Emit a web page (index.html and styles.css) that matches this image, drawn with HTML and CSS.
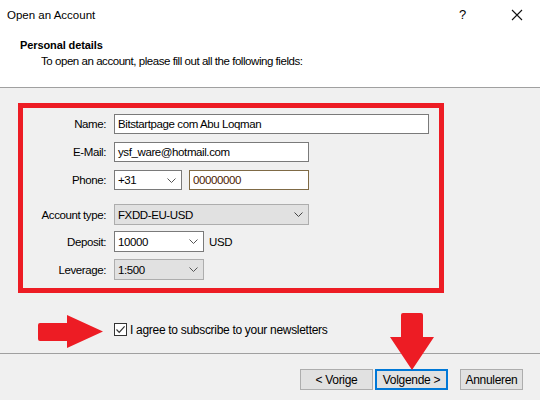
FILE: index.html
```html
<!DOCTYPE html>
<html>
<head>
<meta charset="utf-8">
<link rel="stylesheet" href="styles.css">
</head>
<body>
<div class="dialog">
  <div class="top">
    <div class="titlebar">
      <span class="title">Open an Account</span>
      <span class="help">?</span>
      <svg class="close" width="12" height="12" viewBox="0 0 12 12"><path d="M1 1 L11 11 M11 1 L1 11" stroke="#111" stroke-width="1.1" fill="none"/></svg>
    </div>
    <div class="heading">
      <div class="h-title">Personal details</div>
      <div class="h-sub">To open an account, please fill out all the following fields:</div>
    </div>
  </div>

  <div class="body">
    <div class="redbox">
      <div class="row">
        <span class="label">Name:</span>
        <div class="field w-name">Bitstartpage com Abu Loqman</div>
      </div>
      <div class="row">
        <span class="label">E-Mail:</span>
        <div class="field w-mid">ysf_ware@hotmail.com</div>
      </div>
      <div class="row">
        <span class="label">Phone:</span>
        <div class="field combo w-code">+31<svg class="chev" width="9" height="5" viewBox="0 0 9 5"><path d="M0.5 0.5 L4.5 4.5 L8.5 0.5" stroke="#555" fill="none"/></svg></div>
        <div class="field focus w-phone">00000000</div>
      </div>
      <div class="row row-acct">
        <span class="label">Account type:</span>
        <div class="field combo gray w-mid">FXDD-EU-USD<svg class="chev" width="9" height="5" viewBox="0 0 9 5"><path d="M0.5 0.5 L4.5 4.5 L8.5 0.5" stroke="#444" fill="none"/></svg></div>
      </div>
      <div class="row row-dep">
        <span class="label">Deposit:</span>
        <div class="field combo w-small">10000<svg class="chev" width="9" height="5" viewBox="0 0 9 5"><path d="M0.5 0.5 L4.5 4.5 L8.5 0.5" stroke="#555" fill="none"/></svg></div>
        <span class="unit">USD</span>
      </div>
      <div class="row row-lev">
        <span class="label">Leverage:</span>
        <div class="field combo gray w-small">1:500<svg class="chev" width="9" height="5" viewBox="0 0 9 5"><path d="M0.5 0.5 L4.5 4.5 L8.5 0.5" stroke="#555" fill="none"/></svg></div>
      </div>
    </div>

    <div class="agree">
      <span class="checkbox"><svg width="11" height="11" viewBox="0 0 11 11"><path d="M1.5 5.5 L4.2 8.3 L9.6 2.3" stroke="#333" stroke-width="1.2" fill="none"/></svg></span>
      <span class="agree-text">I agree to subscribe to your newsletters</span>
    </div>
  </div>

  <div class="footer">
    <button class="btn w-btn">&lt; Vorige</button>
    <button class="btn default w-btn">Volgende &gt;</button>
    <button class="btn cancel">Annuleren</button>
  </div>

  <svg class="arrow-left" width="70" height="36" viewBox="0 0 70 36"><path d="M2 8 L29 8 L29 0 L65 16.5 L29 33 L29 26 L2 26 Q0 26 0 24 L0 10 Q0 8 2 8 Z" fill="#ed1c24"/></svg>
  <svg class="arrow-down" width="46" height="58" viewBox="0 0 46 58"><path d="M11 2 Q11 0 13 0 L31 0 Q33 0 33 2 L33 24 L44 24 L22 57 L0 24 L11 24 Z" fill="#ed1c24"/></svg>
</div>
</body>
</html>
```

FILE: styles.css
```css
html, body {
  margin: 0;
  padding: 0;
}
body {
  font-family: "Liberation Sans", Arial, sans-serif;
  font-size: 11.5px;
  letter-spacing: -0.4px;
  color: #000;
}
.dialog {
  position: relative;
  width: 540px;
  height: 400px;
  background: #f0f0f0;
  overflow: hidden;
}
.top {
  height: 87px;
  background: #fff;
  border-bottom: 1px solid #a0a0a0;
}
.titlebar {
  height: 29px;
  display: flex;
  align-items: center;
  padding-left: 7px;
  font-size: 11.5px;
  letter-spacing: 0;
  color: #000;
}
.title {
  flex: 1;
}
.help {
  width: 10px;
  margin-right: 42px;
  font-size: 13px;
}
.close {
  margin-right: 17px;
}
.heading {
  padding-top: 9px;
}
.h-title {
  padding-left: 20px;
  font-weight: bold;
  font-size: 11px;
  letter-spacing: -0.1px;
  line-height: 14px;
  height: 14px;
}
.h-sub {
  padding-left: 41px;
  margin-top: 2px;
  line-height: 14px;
  letter-spacing: -0.45px;
}
.body {
  padding-top: 15px;
}
.redbox {
  box-sizing: border-box;
  margin-left: 18px;
  width: 426px;
  height: 190px;
  border: 5px solid #ed1c24;
  padding-top: 6px;
  display: flex;
  flex-direction: column;
}
.row {
  display: flex;
  align-items: center;
  height: 20px;
  margin-bottom: 8px;
}
.row-acct {
  margin-top: 6px;
  height: 21px;
  margin-bottom: 6px;
}
.row-dep {
  height: 21px;
  margin-bottom: 7px;
}
.row-lev {
  height: 21px;
}
.label {
  width: 83px;
  text-align: right;
  margin-right: 8px;
  color: #000;
}
.field {
  box-sizing: border-box;
  height: 100%;
  background: #fff;
  border: 1px solid #7a7a7a;
  padding-left: 3px;
  display: flex;
  align-items: center;
  color: #000;
}
.combo {
  position: relative;
  justify-content: space-between;
  padding-right: 5px;
}
.gray {
  background: #e1e1e1;
  border-color: #adadad;
}
.focus {
  border-color: #7f6a45;
  margin-left: 7px;
  color: #4a2200;
}
.chev {
  flex: none;
}
.w-name { width: 315px; }
.w-mid { width: 195px; }
.w-code { width: 68px; }
.w-phone { width: 120px; }
.w-small { width: 90px; }
.unit {
  margin-left: 5px;
}
.agree {
  display: flex;
  align-items: center;
  margin-top: 30px;
  margin-left: 114px;
  height: 13px;
}
.checkbox {
  box-sizing: border-box;
  width: 13px;
  height: 13px;
  border: 1px solid #333;
  background: #fff;
  display: flex;
  align-items: center;
  justify-content: center;
}
.agree-text {
  margin-left: 3px;
  font-size: 12px;
  letter-spacing: -0.3px;
}
.footer {
  position: absolute;
  left: 0;
  right: 0;
  top: 353px;
  bottom: 0;
  border-top: 1px solid #a0a0a0;
  display: flex;
  align-items: flex-start;
  padding-top: 15px;
  padding-left: 300px;
}
.btn {
  box-sizing: border-box;
  height: 21px;
  font-family: "Liberation Sans", Arial, sans-serif;
  font-size: 12px;
  letter-spacing: -0.3px;
  color: #000;
  background: #e1e1e1;
  border: 1px solid #adadad;
  padding: 0;
  margin: 0;
}
.w-btn { width: 73px; }
.default {
  margin-left: 2px;
  border: 2px solid #0078d7;
}
.cancel {
  width: 63px;
  margin-left: 12px;
}
.arrow-left {
  position: absolute;
  left: 38px;
  top: 315px;
}
.arrow-down {
  position: absolute;
  left: 390px;
  top: 313px;
}
```
